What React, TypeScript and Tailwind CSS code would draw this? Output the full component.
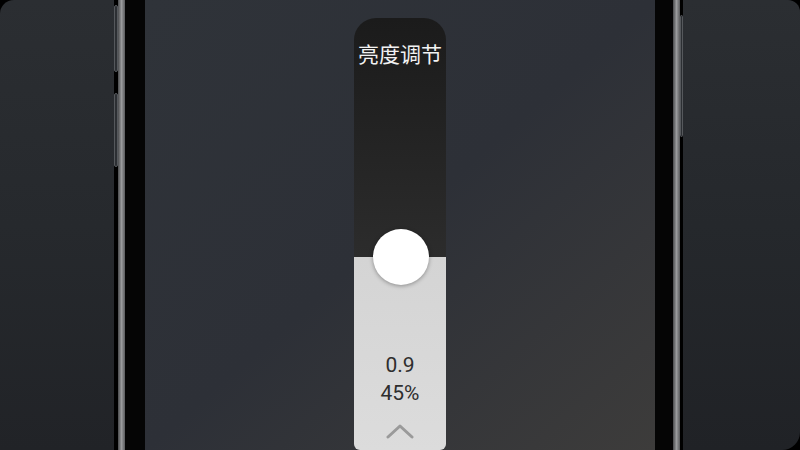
import React from "react";

function SideButtons({ side }: { side: "left" | "right" }) {
  if (side === "left") {
    return (
      <div className="flex w-[4px] flex-col gap-[21px] pt-[5px]">
        <div className="h-[67px] rounded-[2px] border border-[#55585c] bg-[#2c2f33]" />
        <div className="h-[74px] rounded-[2px] border border-[#55585c] bg-[#2c2f33]" />
      </div>
    );
  }
  return (
    <div className="flex w-[3px] flex-col pt-[15px]">
      <div className="h-[122px] rounded-[2px] border border-[#55585c] bg-[#2c2f33]" />
    </div>
  );
}

function Metal() {
  return <div className="w-[7px] bg-gradient-to-r from-[#4a4b4d] via-[#9a9b9d] to-[#5a5b5d]" />;
}

function BrightnessSlider() {
  return (
    <div className="relative flex h-[432px] w-[92px] flex-col overflow-hidden rounded-t-[22px] rounded-b-[6px]">
      <div className="flex h-[239px] flex-col items-center bg-gradient-to-b from-[#1b1b1b] to-[#2c2c2c] pt-[21px]">
        <span
          className="text-[21px] leading-[28px] text-[#f2f2f2]"
          style={{ fontFamily: '"Noto Sans CJK SC", "Noto Sans", sans-serif' }}
        >
          亮度调节
        </span>
      </div>
      <div
        className="flex flex-1 flex-col items-center bg-gradient-to-b from-[#d4d4d4] to-[#dcdcdc] pt-[94px] text-[#2e2e2e]"
        style={{ fontFamily: 'Roboto, "Noto Sans", sans-serif' }}
      >
        <span className="text-[21px] leading-[28px]">0.9</span>
        <span className="text-[21px] leading-[28px]">45%</span>
        <svg width="28" height="16" viewBox="0 0 28 16" className="mt-[16px]">
          <polyline
            points="2,14 14,3 26,14"
            fill="none"
            stroke="#9a9a9a"
            strokeWidth="3"
            strokeLinecap="round"
            strokeLinejoin="round"
          />
        </svg>
      </div>
      <div className="absolute left-[19px] top-[211px] h-[56px] w-[56px] rounded-full bg-white shadow-[0_1px_4px_rgba(0,0,0,0.35)]" />
    </div>
  );
}

export default function App() {
  return (
    <div className="flex h-[450px] w-[800px] overflow-hidden bg-black">
      <div className="w-[114px] rounded-tl-[14px] bg-gradient-to-b from-[#2b2e32] via-[#26292d] to-[#212327]" />
      <SideButtons side="left" />
      <Metal />
      <div className="w-[20px] bg-[#050505]" />
      <div className="flex flex-1 justify-center bg-gradient-to-br from-[#2f3339] via-[#2d3037] to-[#3d3c3b] pt-[18px]">
        <BrightnessSlider />
      </div>
      <div className="w-[18px] bg-[#050505]" />
      <Metal />
      <SideButtons side="right" />
      <div className="w-[117px] rounded-tr-[12px] rounded-br-[18px] bg-gradient-to-b from-[#2b2e32] via-[#25282c] to-[#202226]" />
    </div>
  );
}
